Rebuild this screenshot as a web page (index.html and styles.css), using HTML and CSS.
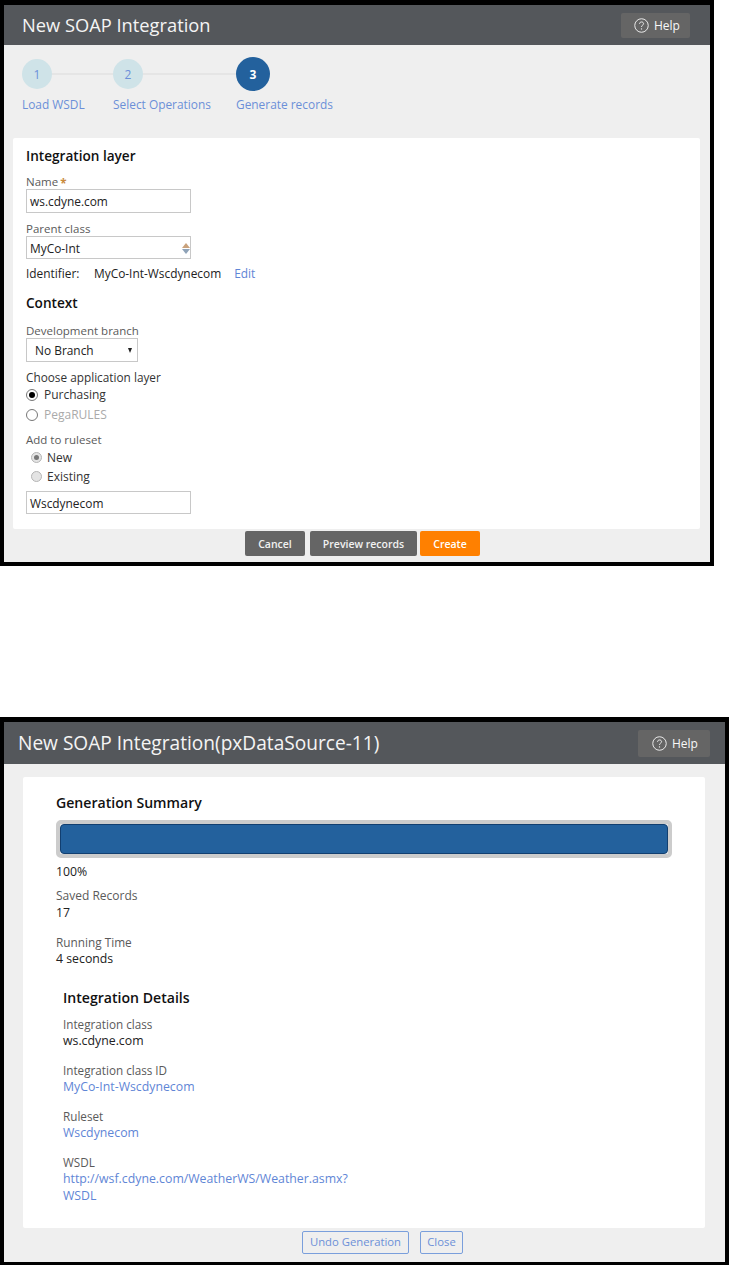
FILE: index.html
```html
<!DOCTYPE html>
<html lang="en">
<head>
<meta charset="utf-8">
<title>New SOAP Integration</title>
<link rel="stylesheet" href="styles.css">
</head>
<body>
<section class="dialog dialog-one">
  <header class="head head-one">
    <h1 class="title">New SOAP Integration</h1>
    <button class="help help-one"><svg class="help-icon" viewBox="0 0 16 16"><circle cx="8" cy="8" r="7.2" fill="none" stroke="#f2f2f2" stroke-width="1"/><path d="M5.9 6.2c.1-1.3 1-2 2.2-2 1.2 0 2.1.8 2.1 1.8 0 1.7-2.200 1.700-2.200 3.500" fill="none" stroke="#f2f2f2" stroke-width="1"/><circle cx="8" cy="11.600" r=".7" fill="#f2f2f2"/></svg>Help</button>
  </header>
  <div class="steps">
    <div class="step step-a"><div class="track"><span class="dot">1</span><span class="line"></span></div><span class="step-label">Load WSDL</span></div>
    <div class="step step-b"><div class="track"><span class="dot">2</span><span class="line"></span></div><span class="step-label">Select Operations</span></div>
    <div class="step step-c"><div class="track"><span class="dot dot-on">3</span></div><span class="step-label">Generate records</span></div>
  </div>
  <main class="card card-one">
    <h2 class="heading h-layer">Integration layer</h2>
    <div class="label l-name">Name<span class="star">*</span></div>
    <div class="field">ws.cdyne.com</div>
    <div class="label l-parent">Parent class</div>
    <div class="field field-parent">MyCo-Int<span class="spin"><i class="up"></i><i class="down"></i></span></div>
    <div class="ident"><span class="ident-key">Identifier:</span><span class="ident-val">MyCo-Int-Wscdynecom</span><a class="link">Edit</a></div>
    <h2 class="heading h-context">Context</h2>
    <div class="label l-dev">Development branch</div>
    <div class="field field-select">No Branch<i class="caret"></i></div>
    <div class="label l-choose">Choose application layer</div>
    <div class="radio r-purch"><i class="mark mark-on"></i>Purchasing</div>
    <div class="radio r-pega"><i class="mark"></i>PegaRULES</div>
    <div class="label l-add">Add to ruleset</div>
    <div class="radio r-new"><i class="mark mark-soft mark-soft-on"></i>New</div>
    <div class="radio r-exist"><i class="mark mark-soft"></i>Existing</div>
    <div class="field field-set">Wscdynecom</div>
  </main>
  <footer class="actions actions-one">
    <button class="btn btn-dark b-cancel">Cancel</button>
    <button class="btn btn-dark b-preview">Preview records</button>
    <button class="btn btn-orange b-create">Create</button>
  </footer>
</section>

<section class="dialog dialog-two">
  <header class="head head-two">
    <h1 class="title title-two">New SOAP Integration(pxDataSource-11)</h1>
    <button class="help help-two"><svg class="help-icon" viewBox="0 0 16 16"><circle cx="8" cy="8" r="7.2" fill="none" stroke="#f2f2f2" stroke-width="1"/><path d="M5.9 6.2c.1-1.3 1-2 2.2-2 1.2 0 2.1.8 2.1 1.8 0 1.7-2.200 1.700-2.200 3.500" fill="none" stroke="#f2f2f2" stroke-width="1"/><circle cx="8" cy="11.600" r=".7" fill="#f2f2f2"/></svg>Help</button>
  </header>
  <main class="card card-two">
    <h2 class="heading h-summary">Generation Summary</h2>
    <div class="progress"><div class="bar"></div></div>
    <div class="val v-pct">100%</div>
    <div class="label l-saved">Saved Records</div>
    <div class="val">17</div>
    <div class="label l-block l-run">Running Time</div>
    <div class="val">4 seconds</div>
    <div class="details">
      <h2 class="heading h-details">Integration Details</h2>
      <div class="label l-first">Integration class</div>
      <div class="val">ws.cdyne.com</div>
      <div class="label l-block">Integration class ID</div>
      <a class="val link">MyCo-Int-Wscdynecom</a>
      <div class="label l-block">Ruleset</div>
      <a class="val link">Wscdynecom</a>
      <div class="label l-block">WSDL</div>
      <a class="val link">http://wsf.cdyne.com/WeatherWS/Weather.asmx?<br>WSDL</a>
    </div>
  </main>
  <footer class="actions actions-two">
    <button class="btn btn-line b-undo">Undo Generation</button>
    <button class="btn btn-line b-close">Close</button>
  </footer>
</section>
</body>
</html>
```

FILE: styles.css
```css
* { box-sizing: border-box; }
html, body { margin: 0; padding: 0; background: #fff; }
body { font-family: "Open Sans", "Liberation Sans", sans-serif; font-size: 12px; color: #1f1f1f; height: 1265px; overflow: hidden; }
h1, h2 { margin: 0; font-weight: 400; }
button { font-family: inherit; }
a { color: #5f86d6; }

.dialog { background: #efefef; border: solid #000; display: flex; flex-direction: column; }
.dialog-one { width: 714px; height: 566px; border-width: 5px 4px 4px 4px; }
.dialog-two { width: 729px; height: 548px; margin-top: 151px; border-width: 5px 4px 3px 4px; }

.head { background: #54575b; display: flex; align-items: center; justify-content: space-between; flex: none; }
.head-one { height: 40px; padding: 0 20px 0 18px; }
.head-two { height: 42px; padding: 0 15px 0 14px; }
.title { font-size: 18.3px; color: #f4f4f4; line-height: 26px; white-space: nowrap; }
.title-two { font-size: 19.13px; }
.help { display: flex; align-items: center; gap: 5px; background: #656565; border: 0; border-radius: 2px; color: #f8f8f8; font-size: 12px; font-weight: 400; padding: 0; }
.help-one { width: 69px; height: 25px; padding-left: 13px; }
.help-two { width: 72px; height: 27px; padding-left: 14px; }
.help-icon { width: 15px; height: 15px; }

.steps { display: flex; padding: 12px 0 0 18px; height: 93px; flex: none; }
.step { display: flex; flex-direction: column; }
.step-a { width: 91px; }
.step-b { width: 123px; }
.track { display: flex; align-items: center; height: 34px; }
.dot { flex: none; width: 30px; height: 30px; border-radius: 50%; background: #cfe3e8; color: #6c8fd8; display: flex; align-items: center; justify-content: center; font-size: 12px; }
.dot-on { width: 34px; height: 34px; background: #23619d; color: #fff; font-weight: 700; }
.line { flex: 1; height: 2px; background: #e5e5e5; }
.step-label { color: #6c8fd8; font-size: 11.9px; line-height: 16px; margin-top: 5px; white-space: nowrap; }

.card { background: #fff; border-radius: 2px; flex: none; }
.card-one { width: 687px; height: 391px; margin-left: 9px; padding: 8px 13px 0; }
.card-two { width: 682px; height: 451px; margin: 13px 0 0 19px; padding: 16px 33px 0; }

.heading { font-size: 14.1px; font-weight: 600; color: #111; line-height: 20px; }
.h-layer, .h-context { font-size: 13.6px; }
.label { font-size: 11.8px; line-height: 16px; color: #5a5a5a; }
.card-one .label { font-size: 11.5px; height: 15px; line-height: 15px; }
.l-name { margin-top: 8px; }
.star { color: #c98a3c; font-weight: 700; margin-left: 2px; vertical-align: -2px; }
.l-parent { margin-top: 8px; }
.l-dev { margin-top: 10px; }
.card-one .l-choose { margin-top: 8px; color: #333; font-size: 11.8px; }
.l-add { margin-top: 7px; }

.field { width: 165px; height: 24px; border: 1px solid #c8c8c8; padding: 0 3px; line-height: 22px; font-size: 11.9px; color: #222; position: relative; background: #fff; }
.field-parent { height: 23px; }
.field-select { width: 112px; padding-left: 8px; line-height: 23px; }
.field-set { margin-top: 5px; height: 23px; }
.spin { position: absolute; right: 0; top: 6px; display: flex; flex-direction: column; gap: 1px; }
.up, .down { display: block; width: 0; height: 0; border-left: 4px solid transparent; border-right: 4px solid transparent; }
.up { border-bottom: 5px solid #c9a27c; }
.down { border-top: 5px solid #8fa3b8; }
.caret { position: absolute; right: 5px; top: 9px; width: 0; height: 0; border-left: 2.5px solid transparent; border-right: 2.5px solid transparent; border-top: 5px solid #222; }

.ident { display: flex; margin-top: 6px; line-height: 16px; font-size: 11.9px; }
.ident-key { width: 68px; }
.ident-val { margin-right: 13px; color: #222; }
.link { color: #5f86d6; }
.h-context { margin-top: 12px; }

.radio { display: flex; align-items: center; line-height: 20px; height: 20px; color: #333; gap: 6px; }
.r-pega { color: #aaa; }
.r-new, .r-exist { padding-left: 5px; gap: 5px; height: 19px; }
.r-new { margin-top: 1px; }
.mark { flex: none; width: 12px; height: 12px; border-radius: 50%; border: 1px solid #777; background: #fff; display: block; position: relative; }
.mark-on::after { content: ""; position: absolute; inset: 2px; border-radius: 50%; background: #000; }
.mark-soft { width: 11px; height: 11px; border-color: #b5b5b5; background: #e4e4e4; }
.mark-soft-on::after { content: ""; position: absolute; inset: 2px; border-radius: 50%; background: #777; }

.actions { display: flex; flex: none; }
.actions-one { padding: 2px 0 0 241px; }
.actions-two { gap: 11px; padding: 3px 0 0 298px; }
.btn { border-radius: 2px; font-size: 10.5px; height: 25px; padding: 0; }
.btn-dark { background: #656565; border: 0; color: #f2f2f2; font-weight: 600; }
.btn-orange { background: #ff8000; border: 0; color: #fff; font-weight: 600; }
.btn-line { background: #fff0; border: 1px solid #7a9fdc; color: #6c8fd8; font-size: 11.3px; height: 23px; padding-bottom: 3px; }
.b-cancel { width: 60px; margin-right: 5px; }
.b-preview { width: 107px; margin-right: 3px; }
.b-create { width: 60px; }
.b-undo { width: 107px; }
.b-close { width: 43px; }

.h-summary { margin-bottom: 7px; }
.progress { width: 616px; height: 38px; background: #ededed; border: 4px solid #ccc; border-radius: 5px; }
.bar { height: 100%; background: #23619d; border: 1px solid #123f70; border-radius: 4px; }
.val { display: block; font-size: 12.3px; line-height: 17px; color: #222; }
.v-pct { margin-top: 5px; }
.card-two .label { font-size: 11.7px; }
.card-two .l-saved { margin-top: 8px; font-size: 12px; }
.card-two .l-run { font-size: 11.8px; }
.l-block { margin-top: 13px; }
.details { padding: 21px 0 0 7px; }
.l-first { margin-top: 8px; }
.val.link { color: #5f86d6; }
```
